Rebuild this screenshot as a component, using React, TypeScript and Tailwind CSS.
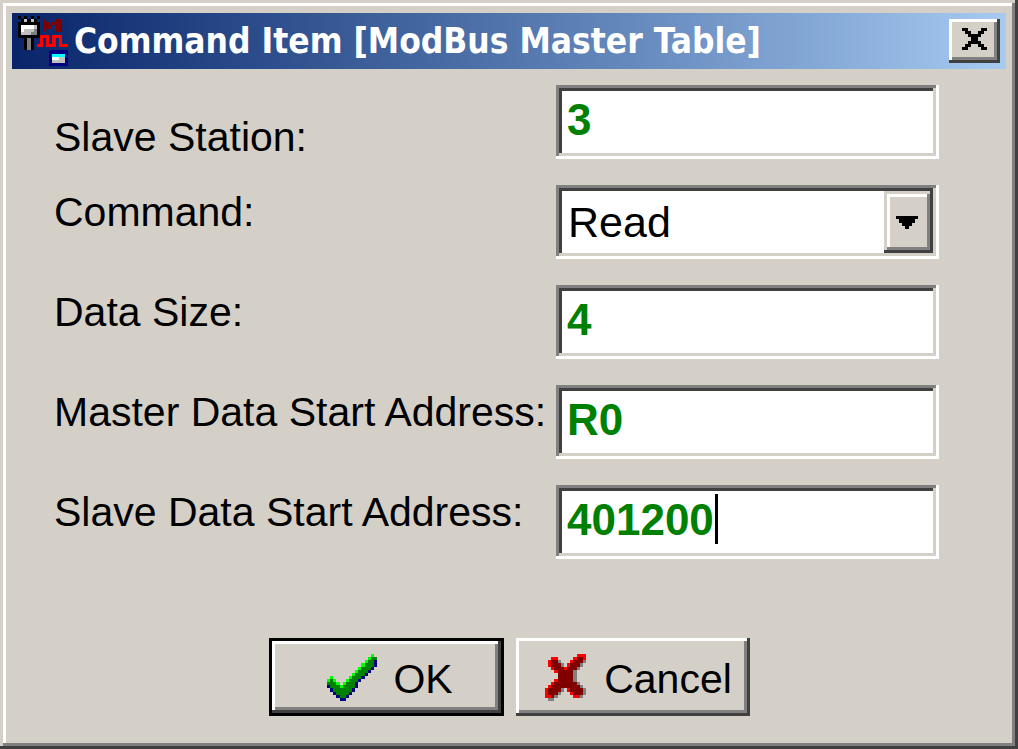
import React, { useState } from "react";

const raised =
  "bg-[#d4d0c8] shadow-[inset_-3px_-3px_#404040,inset_3px_3px_#fff,inset_-6px_-6px_#808080]";
const sunken =
  "bg-white shadow-[inset_-3px_-3px_#fff,inset_3px_3px_#808080,inset_-6px_-6px_#d4d0c8,inset_6px_6px_#404040]";

const colors: Record<string, string> = {
  K: "#000000",
  W: "#ffffff",
  S: "#c0c0c0",
  g: "#808080",
  R: "#ff0000",
  D: "#800000",
  L: "#00ff00",
  G: "#008000",
  N: "#000080",
  C: "#00ffff",
};

const appIcon = [
  "K.K.K.K",
  ".KSKSK..D...DD",
  "KKKKKKK.DD.DDD",
  "KWWWWSK.DDD.DD",
  "KWSSSgK.D...DD",
  "KSSSggK",
  "KKKKKKKRRR.RRR",
  "..KgK..R.R.R.R",
  "..KgK..R.R.R.R",
  "..KgK.RR.RRR.RRR",
  "..KgK",
  "..........NNNNNN",
  "..........NCCCCN",
  "..........NWWSSN",
  "..........NSSSSN",
  "..........NNNNNN",
];

const closeIcon = [
  "KK....KK",
  ".KK..KK.",
  "..KKKK..",
  "...KK...",
  "..KKKK..",
  ".KK..KK.",
  "KK....KK",
];

const arrowIcon = ["KKKKKKK", ".KKKKK.", "..KKK..", "...K..."];

const checkIcon = [
  "..............L.",
  ".............LGG",
  "............LGGN",
  "...........LGGGN",
  "..........LGGGN.",
  ".........LGGGN..",
  "........LGGGN...",
  ".L.....LGGGN....",
  "LGL...LGGGN.....",
  "GGGL.LGGGN......",
  "NGGGLGGGGN......",
  ".NGGGGGGN.......",
  "..NGGGGN........",
  "...NGGN.........",
  "....NN..........",
];

const crossIcon = [
  "..........RRR",
  "..RR.....RDDR",
  ".RDDg...RDDDg",
  ".RDDDg.RDDDg.",
  "..RDDDRDDDg..",
  "...RDDDDDg...",
  "....DDDDDg...",
  "....DDDDDg...",
  "...RDDDDDg...",
  "..RDDDDDDDg..",
  ".RDDDDDDDDDg.",
  "RDDDDg.RDDDDg",
  "RDDDg...RDDDg",
  "RRDg.....RRg.",
  ".gg..........",
];

function PixelIcon({ rows, className }: { rows: string[]; className: string }) {
  const width = Math.max(...rows.map((row) => row.length));
  return (
    <svg
      className={className}
      viewBox={`0 0 ${width} ${rows.length}`}
      preserveAspectRatio="none"
      shapeRendering="crispEdges"
      aria-hidden="true"
    >
      {rows.map((row, y) =>
        row.split("").map((c, x) =>
          c === "." ? null : <rect key={`${x}-${y}`} x={x} y={y} width={1} height={1} fill={colors[c]} />
        )
      )}
    </svg>
  );
}

function Label({ id, text, className = "pt-[5px]" }: { id: string; text: string; className?: string }) {
  return (
    <label htmlFor={id} className={`whitespace-nowrap text-[41px] leading-[44px] ${className}`}>
      {text}
    </label>
  );
}

function TextField({ id, initial, caret = false }: { id: string; initial: string; caret?: boolean }) {
  const [value, setValue] = useState(initial);
  return (
    <div className={`relative h-[74px] p-[6px] ${sunken}`}>
      <input
        id={id}
        type="text"
        value={value}
        onChange={(e) => setValue(e.target.value)}
        className="block h-full w-full min-w-0 bg-transparent pb-[4px] pl-[5px] text-[44px] font-bold text-[#008000] outline-none"
      />
      {caret && <span className="absolute left-[159px] top-[9px] h-[50px] w-[3px] bg-black" />}
    </div>
  );
}

export default function App() {
  return (
    <div className="min-h-screen bg-[#d4d0c8] px-3 pt-[13px] pb-8 font-['Liberation_Sans',Arial,sans-serif] text-black shadow-[inset_-3px_-3px_#404040,inset_3px_3px_#d4d0c8,inset_-6px_-6px_#808080,inset_6px_6px_#fff]">
      <header className="flex h-14 items-center bg-linear-to-r from-[#0a246a] to-[#a6caf0] pr-[6px] pl-[6px]">
        <PixelIcon rows={appIcon} className="size-[50px] shrink-0" />
        <h1 className="ml-[6px] flex-1 whitespace-nowrap font-['DejaVu_Sans_Condensed','DejaVu_Sans',sans-serif] text-[35px] font-bold text-white">
          Command Item [ModBus Master Table]
        </h1>
        <button type="button" aria-label="Close" className={`flex h-[44px] w-[51px] items-center justify-center pr-px pb-[5px] ${raised}`}>
          <PixelIcon rows={closeIcon} className="h-[22px] w-[25px]" />
        </button>
      </header>

      <form onSubmit={(e) => e.preventDefault()}>
        <div className="mt-4 mr-[67px] ml-[42px] grid grid-cols-[502px_1fr] gap-y-[26px]">
          <Label id="station" text="Slave Station:" className="pt-[30px]" />
          <TextField id="station" initial="3" />

          <Label id="command" text="Command:" />
          <div className={`relative h-[74px] p-[6px] ${sunken}`}>
            <select
              id="command"
              defaultValue="Read"
              className="block h-full w-full appearance-none bg-transparent pr-14 pl-[6px] text-[43px] leading-[60px] outline-none"
            >
              <option>Read</option>
              <option>Write</option>
            </select>
            <span className="pointer-events-none absolute top-[6px] right-[6px] flex h-[62px] w-[49px] items-center justify-center bg-[#d4d0c8] pr-[3px] shadow-[inset_-3px_-3px_#404040,inset_3px_3px_#d4d0c8,inset_-6px_-6px_#808080,inset_6px_6px_#fff]">
              <PixelIcon rows={arrowIcon} className="h-[13px] w-[22px]" />
            </span>
          </div>

          <Label id="size" text="Data Size:" />
          <TextField id="size" initial="4" />

          <Label id="master" text="Master Data Start Address:" />
          <TextField id="master" initial="R0" />

          <Label id="slave" text="Slave Data Start Address:" />
          <TextField id="slave" initial="401200" caret />
        </div>

        <div className="mt-[79px] flex justify-center gap-3">
          <button type="submit" className="h-[78px] w-[235px] bg-black p-[3px] text-[41px]">
            <span className={`flex h-full items-center justify-center gap-4 pl-2 ${raised}`}>
              <PixelIcon rows={checkIcon} className="h-[47px] w-[50px]" />
              <span className="pt-[6px]">OK</span>
            </span>
          </button>
          <button type="button" className={`flex h-[78px] w-[234px] items-center justify-center gap-[18px] pl-3 text-[41px] ${raised}`}>
            <PixelIcon rows={crossIcon} className="h-[47px] w-[41px]" />
            <span className="pt-[6px]">Cancel</span>
          </button>
        </div>
      </form>
    </div>
  );
}
